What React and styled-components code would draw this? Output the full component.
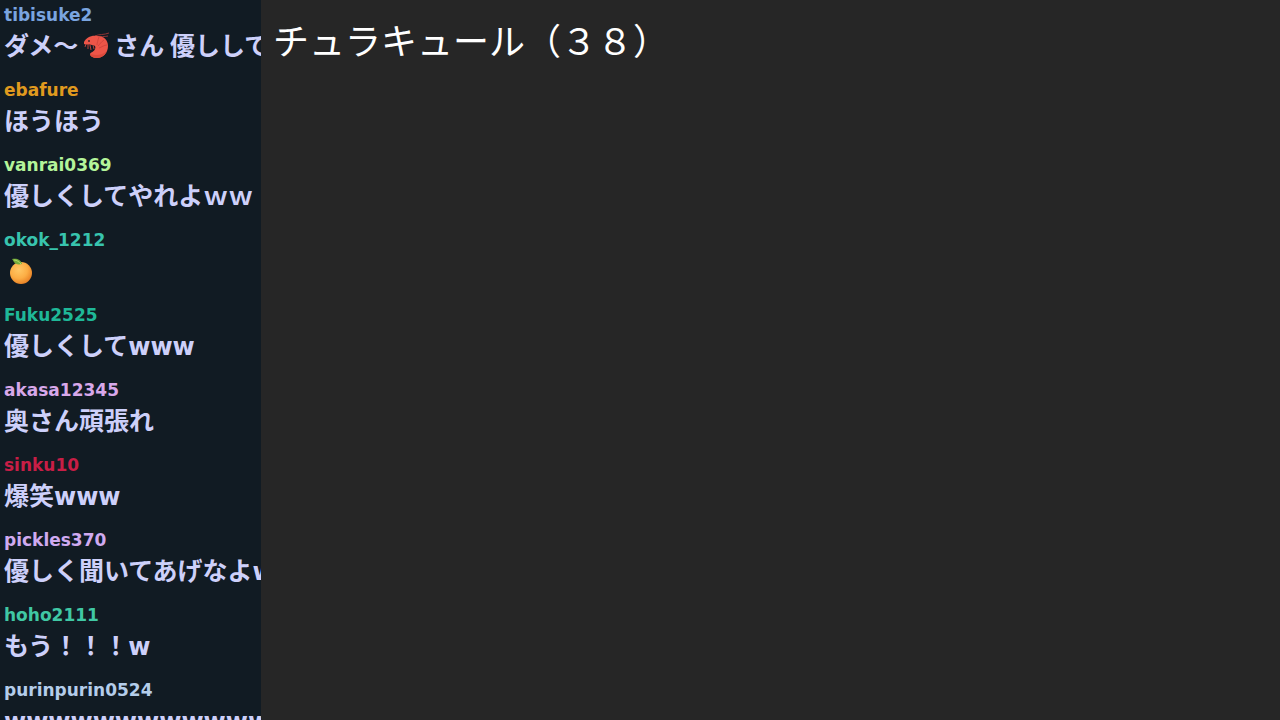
import styled, { createGlobalStyle } from "styled-components";

const messages = [
  { user: "tibisuke2", color: "#7aa5e0", parts: ["ダメ～", "shrimp", "さん 優しして"] },
  { user: "ebafure", color: "#e09a1e", parts: ["ほうほう"] },
  { user: "vanrai0369", color: "#b4f59a", parts: ["優しくしてやれよｗｗ"] },
  { user: "okok_1212", color: "#38c4ae", parts: ["orange"] },
  { user: "Fuku2525", color: "#1fb898", parts: ["優しくして"], laugh: "www" },
  { user: "akasa12345", color: "#d8a8ea", parts: ["奥さん頑張れ"] },
  { user: "sinku10", color: "#c81e46", parts: ["爆笑"], laugh: "www" },
  { user: "pickles370", color: "#d0aaf0", parts: ["優しく聞いてあげなよ"], laugh: "w" },
  { user: "hoho2111", color: "#40c8a4", parts: ["もう！！！"], laugh: "w" },
  { user: "purinpurin0524", color: "#b4cdea", parts: [], laugh: "wwwwwwwwwwwwwwww" },
];

function Shrimp() {
  return (
    <Emoji viewBox="0 0 28 28" role="img" aria-label="shrimp">
      <path d="M13 4C17 2 22 3 27 1M15 5c4-1 7 0 11-1" fill="none" stroke="#8f3434" strokeWidth="1" />
      <path
        d="M2 10C4 6 9 3 15 4c7 0 11 4 11 10 0 7-5 12-11 12-4 0-7-2-7-4 1-2 4-2 5-5 1-2 0-4-3-4-3-1-6 0-8-1z"
        fill="#ed5548"
      />
      <path d="M8 22c0 2 3 4 7 4 5 0 8-3 10-7-4 3-7 4-11 4-3 0-4-1-6-1z" fill="#dc4a3c" />
      <path
        d="M17 5c-1 3-2 6-2 8M22 8c-3 2-4 4-6 6M25 13c-3 0-5 2-8 3"
        fill="none"
        stroke="#d4463e"
        strokeWidth="1"
      />
      <path
        d="M4 12l-1 3M6 12v5M8 13l1 5M11 13l1 4"
        fill="none"
        stroke="#b8403a"
        strokeWidth="1"
      />
      <circle cx="7" cy="9" r="1" fill="#47262b" />
    </Emoji>
  );
}

function Orange() {
  return (
    <Emoji viewBox="0 0 28 28" role="img" aria-label="orange">
      <defs>
        <radialGradient id="peel" cx="0.4" cy="0.35" r="0.65">
          <stop offset="0" stopColor="#ffc866" />
          <stop offset="0.6" stopColor="#fcae45" />
          <stop offset="1" stopColor="#ea8528" />
        </radialGradient>
      </defs>
      <circle cx="13" cy="16" r="11" fill="url(#peel)" />
      <path d="M4 2c4-1 9 0 10 5-4 1-7 0-8-2-1-1-1-2-2-3z" fill="#74ad3c" />
      <path d="M6 3c3 0 5 2 7 4" fill="none" stroke="#b5d968" strokeWidth="1" />
    </Emoji>
  );
}

const emotes = { shrimp: Shrimp, orange: Orange };

function Message({ user, color, parts, laugh }) {
  return (
    <Row>
      <User color={color}>{user}</User>
      <Text>
        {parts.map((part) => {
          const Emote = emotes[part];
          return Emote ? <Emote key={part} /> : <span key={part}>{part}</span>;
        })}
        {laugh && <Laugh>{laugh}</Laugh>}
      </Text>
    </Row>
  );
}

function App() {
  return (
    <Page>
      <GlobalStyle />
      <Chat aria-label="chat">
        {messages.map((message) => (
          <Message key={message.user} {...message} />
        ))}
      </Chat>
      <Stage>
        <Title>チュラキュール（３８）</Title>
      </Stage>
    </Page>
  );
}

const GlobalStyle = createGlobalStyle`
  body {
    margin: 0;
    overflow: hidden;
    background: #262626;
    font-family: "DejaVu Sans", "Noto Sans CJK JP", sans-serif;
  }
`;

const Page = styled.div`
  display: flex;
  height: 100vh;
  overflow: hidden;
`;

const Chat = styled.ul`
  flex: 0 0 257px;
  margin: 0;
  padding: 1px 0 0 4px;
  list-style: none;
  overflow: hidden;
  background: #111b23;
`;

const Row = styled.li`
  height: 75px;
`;

const User = styled.div`
  color: ${({ color }) => color};
  font-size: 17px;
  font-weight: 700;
  line-height: 28px;
`;

const Text = styled.div`
  color: #cdd0fa;
  font-family: "Noto Sans CJK JP", sans-serif;
  font-size: 25px;
  font-weight: 700;
  line-height: 30px;
  white-space: nowrap;
`;

const Laugh = styled.span`
  font-family: "DejaVu Sans", sans-serif;
  font-size: 24px;
`;

const Emoji = styled.svg`
  width: 28px;
  height: 28px;
  margin: 0 4px;
  vertical-align: -5px;
`;

const Stage = styled.main`
  flex: 1;
  min-width: 0;
  padding: 14px 12px;
  background: #262626;
`;

const Title = styled.h1`
  margin: 0;
  color: #fff;
  font-family: "Noto Sans CJK JP", sans-serif;
  font-size: 36px;
  font-weight: 400;
  line-height: 50px;
`;

export default App;
